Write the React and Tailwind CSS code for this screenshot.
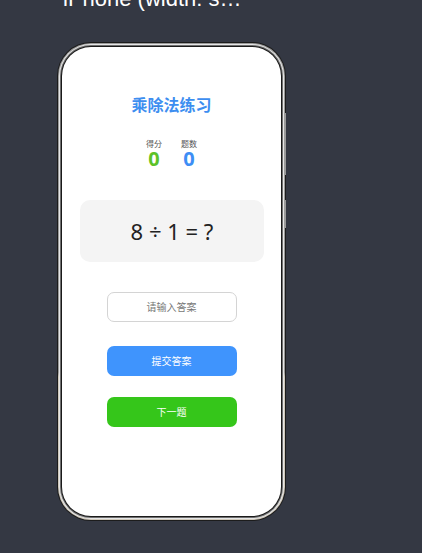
const font = { fontFamily: '"Noto Sans", "Noto Sans CJK SC", sans-serif' };

function PhoneFrame({ children }) {
  return (
    <div className="relative w-[229px] h-[479px]">
      {/* side keys */}
      <div className="absolute right-[0px] top-[71px] w-[1px] h-[62px] bg-[#9a9a9a]" />
      <div className="absolute right-[0px] top-[158px] w-[1px] h-[28px] bg-[#9a9a9a]" />
      <div className="h-full rounded-[34px] p-[1px] bg-[#1c1c1c]">
        <div className="h-full rounded-[33px] p-[1px] bg-[linear-gradient(to_bottom,#9b9b9b_0%,#9b9b9b_69%,#cfc8bb_70%,#cfc8bb_100%)]">
          <div className="h-full rounded-[32px] p-[1px] bg-[#e6e6e6]">
            <div className="h-full rounded-[31px] p-[1px] bg-[#6f6f6f]">
              <div className="h-full rounded-[30px] p-[1px] bg-[#1a1a1a]">
                <div className="h-full rounded-[29px] bg-white overflow-hidden">
                  {children}
                </div>
              </div>
            </div>
          </div>
        </div>
      </div>
    </div>
  );
}

function Score({ label, value, color }) {
  return (
    <div className="flex flex-col items-center">
      <span className="text-[8px] leading-[11px] text-[#555]">{label}</span>
      <span className={`text-[20px] leading-[20px] font-bold ${color}`}>{value}</span>
    </div>
  );
}

export default function App() {
  return (
    <div className="min-h-[553px] bg-[#343843] overflow-hidden" style={font}>
      <div
        className="-mt-[14px] ml-[63px] w-[192px] truncate text-[22px] leading-[26px] text-white"
        style={{ fontFamily: '"Liberation Sans", Arial, sans-serif' }}
      >
        iPhone (width: small screen)
      </div>
      <div className="ml-[57px] mt-[30px]">
        <PhoneFrame>
          <div className="flex flex-col items-center pt-[46px]">
            <h1 className="text-[16px] leading-[24px] font-bold text-[#3d8ef0]">乘除法练习</h1>
            <div className="mt-[21px] flex gap-[19px]">
              <Score label="得分" value="0" color="text-[#5cc229]" />
              <Score label="题数" value="0" color="text-[#3d8ef5]" />
            </div>
            <div className="mt-[31px] w-[184px] h-[62px] ml-[1px] rounded-[10px] bg-[#f4f4f4] flex items-center justify-center">
              <span className="text-[22px] text-[#222]">8 ÷ 1 = ?</span>
            </div>
            <div className="mt-[30px] w-[130px] h-[30px] rounded-[7px] border border-[#d4d4d4] flex items-center justify-center">
              <span className="text-[10px] text-[#777]">请输入答案</span>
            </div>
            <button className="mt-[24px] w-[130px] h-[30px] rounded-[7px] bg-[#3f94fd] text-white text-[10px]">
              提交答案
            </button>
            <button className="mt-[21px] w-[130px] h-[30px] rounded-[7px] bg-[#35c61a] text-white text-[10px]">
              下一题
            </button>
          </div>
        </PhoneFrame>
      </div>
    </div>
  );
}
